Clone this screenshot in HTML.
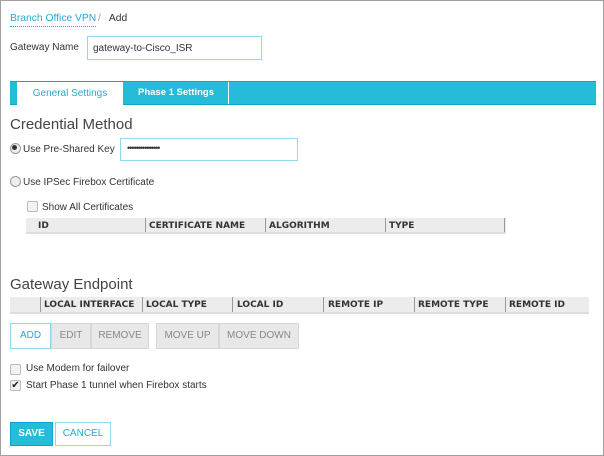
<!DOCTYPE html><html><head><style>
body{margin:0;width:604px;height:456px;overflow:hidden;background:#fff;font-family:"Liberation Sans",sans-serif;font-size:10px;color:#333}
.frame{position:absolute;left:0;top:0;width:602px;height:454px;border:1px solid #a0a0a0}
.a{position:absolute;white-space:nowrap}
.inp{position:absolute;border:1px solid #8fd9ea;background:#fff;box-sizing:border-box}
.th{position:absolute;background:#ececec;border-bottom:2px solid #ddd;box-sizing:border-box;font-family:"DejaVu Sans",sans-serif;font-weight:bold;font-size:9px;color:#333}
.th span{position:absolute;top:3px}
.th i{position:absolute;top:0;bottom:0;width:1px;background:#999}
.btn{position:absolute;top:323px;height:26px;background:#e8e8e8;border:1px solid #d6d6d6;box-sizing:border-box;color:#888;text-align:center;line-height:24px;font-size:10px}
.rad{position:absolute;width:9px;height:9px;border-radius:50%;border:1px solid #999;background:#eee}
.cb{position:absolute;width:9px;height:9px;border:1px solid #bbb;background:#f2f2f2;border-radius:2px}
h2{position:absolute;margin:0;font-weight:normal;font-size:15px;color:#444;left:10px}
</style></head><body><div class="frame"></div>
<div class="a" style="left:10px;top:12px;color:#2aa7cc;border-bottom:1px dotted #2aa7cc;line-height:14px;font-size:10.3px">Branch Office VPN</div>
<div class="a" style="left:98px;top:12px;line-height:14px;font-size:10.3px"><span style="color:#999">/</span>&nbsp;&nbsp; Add</div>
<div class="a" style="left:10px;top:42px;font-size:10px">Gateway Name</div>
<div class="inp" style="left:87px;top:36px;width:175px;height:24px;padding:6px 0 0 5px;font-size:10px">gateway-to-Cisco_ISR</div>
<div class="a" style="left:10px;top:81px;width:586px;height:24px;background:#24bcd8;border-top:1px solid #0aa7c9;border-bottom:1px solid #0aa7c9;box-sizing:border-box"></div>
<div class="a" style="left:17px;top:82px;width:106px;height:24px;background:#fff;color:#2aa7cc;text-align:center;line-height:24px;font-size:10px">General Settings</div>
<div class="a" style="left:124px;top:82px;width:104px;height:22px;color:#fff;text-align:center;line-height:22px;font-weight:bold;font-size:9.5px">Phase 1 Settings</div>
<div class="a" style="left:228px;top:82px;width:1px;height:22px;background:#fff"></div>
<h2 style="top:116px">Credential Method</h2>
<div class="rad" style="left:10px;top:143px"></div><div class="a" style="left:12px;top:145px;width:5px;height:5px;border-radius:50%;background:#333"></div>
<div class="a" style="left:23px;top:144px">Use Pre-Shared Key</div>
<div class="inp" style="left:120px;top:138px;width:178px;height:23px;padding:4px 0 0 6px;font-size:9px;letter-spacing:-1px">•••••••••••••••</div>
<div class="rad" style="left:10px;top:176px"></div>
<div class="a" style="left:23px;top:177px">Use IPSec Firebox Certificate</div>
<div class="cb" style="left:27px;top:201px"></div>
<div class="a" style="left:42px;top:202px">Show All Certificates</div>
<div class="th" style="left:26px;top:218px;width:480px;height:16px"><span style="left:12px">ID</span><i style="left:119px"></i><span style="left:123px">CERTIFICATE NAME</span><i style="left:239px"></i><span style="left:243px">ALGORITHM</span><i style="left:359px"></i><span style="left:363px">TYPE</span><i style="left:478px"></i></div>
<h2 style="top:276px">Gateway Endpoint</h2>
<div class="th" style="left:10px;top:297px;width:579px;height:17px"><i style="left:30px"></i><span style="left:34px">LOCAL INTERFACE</span><i style="left:132px"></i><span style="left:136px">LOCAL TYPE</span><i style="left:222px"></i><span style="left:227px">LOCAL ID</span><i style="left:313px"></i><span style="left:318px">REMOTE IP</span><i style="left:404px"></i><span style="left:408px">REMOTE TYPE</span><i style="left:495px"></i><span style="left:499px">REMOTE ID</span></div>
<div class="btn" style="left:10px;width:41px;background:#fff;border-color:#8fd9ea;color:#2aa7cc">ADD</div>
<div class="btn" style="left:51px;width:40px">EDIT</div>
<div class="btn" style="left:91px;width:58px">REMOVE</div>
<div class="btn" style="left:156px;width:63px">MOVE UP</div>
<div class="btn" style="left:219px;width:80px">MOVE DOWN</div>
<div class="cb" style="left:10px;top:364px"></div>
<div class="a" style="left:26px;top:363px">Use Modem for failover</div>
<div class="cb" style="left:10px;top:380px;text-align:center;line-height:9px;font-size:10px;color:#222">✔</div>
<div class="a" style="left:26px;top:380px">Start Phase 1 tunnel when Firebox starts</div>
<div class="a" style="left:10px;top:422px;width:43px;height:24px;background:#24bcd8;border:1px solid #0aa7c9;box-sizing:border-box;color:#fff;font-weight:bold;text-align:center;line-height:22px;font-size:10px">SAVE</div>
<div class="a" style="left:55px;top:422px;width:56px;height:24px;border:1px solid #8fd9ea;box-sizing:border-box;color:#2aa7cc;text-align:center;line-height:22px;font-size:10px">CANCEL</div>
</body></html>
